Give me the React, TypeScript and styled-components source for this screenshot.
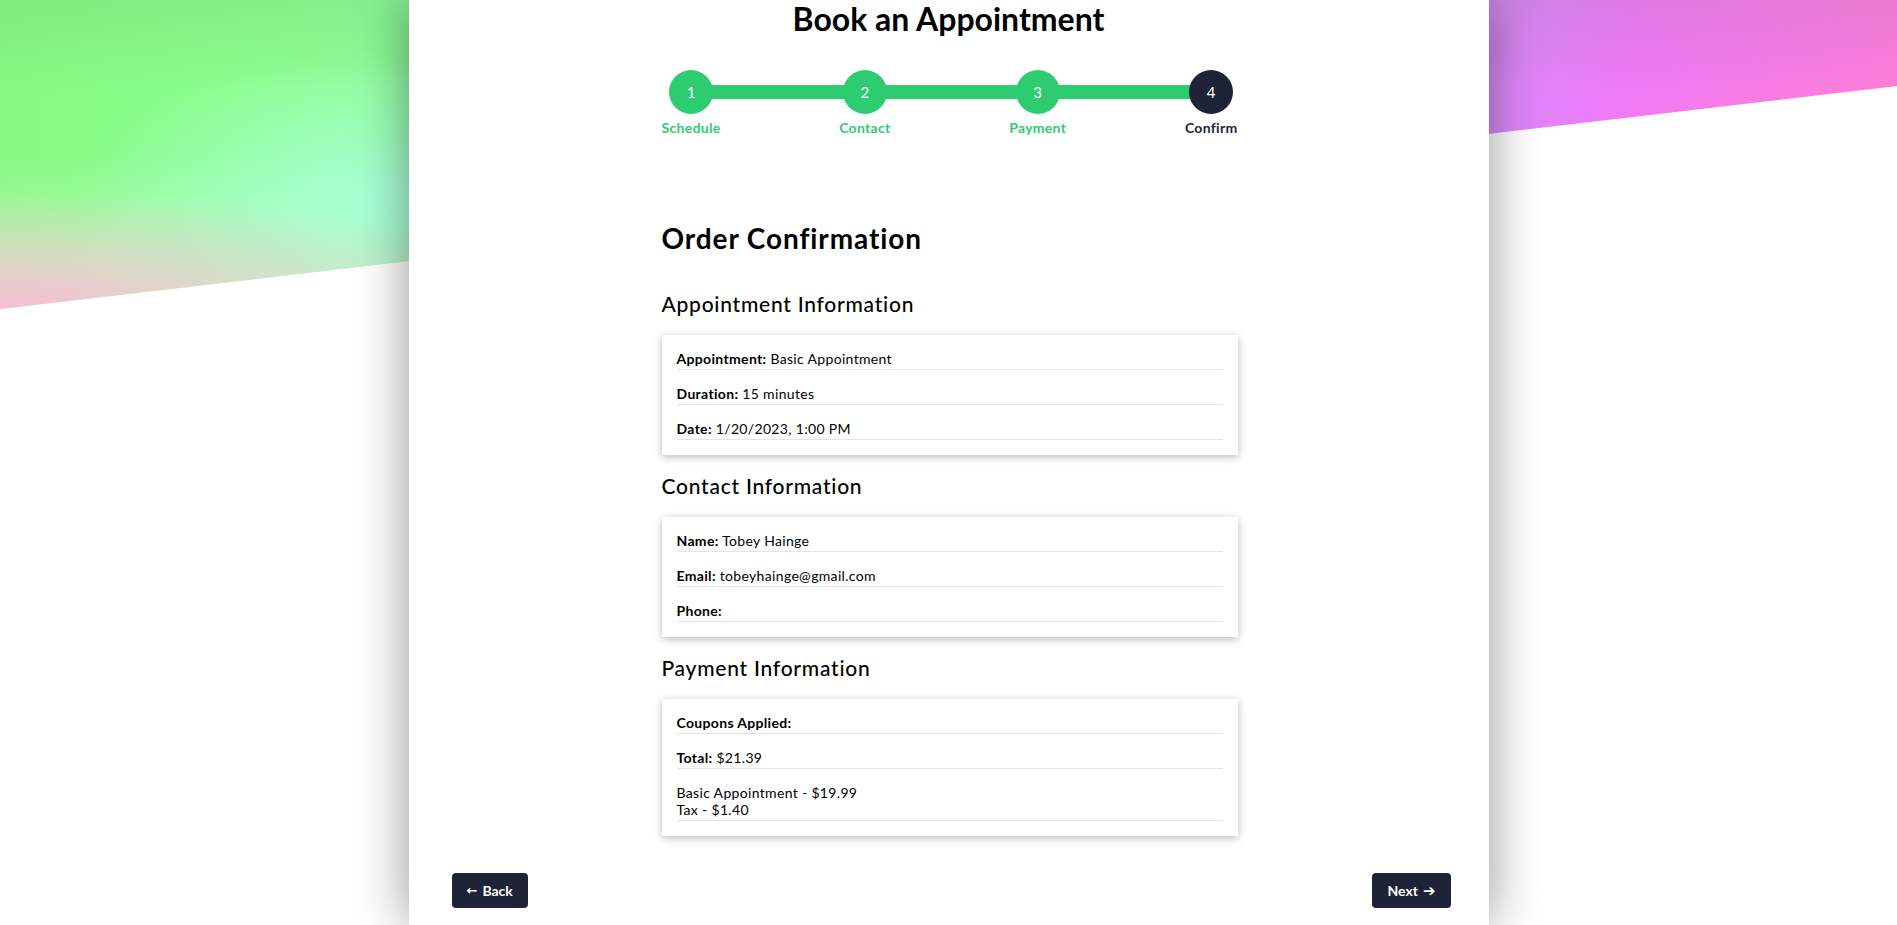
import React from "react";
import styled, { createGlobalStyle } from "styled-components";

const GlobalStyle = createGlobalStyle`
  html, body {
    margin: 0;
    padding: 0;
  }
  body {
    background: #ffffff;
    font-family: "Lato", "Open Sans", "DejaVu Sans", sans-serif;
    color: #000;
    overflow-x: hidden;
  }
  * { box-sizing: border-box; }
`;

const Page = styled.div`
  position: relative;
  min-height: 100vh;
  display: flex;
  justify-content: center;

  &::before {
    content: "";
    position: absolute;
    left: 0;
    right: 0;
    top: 0;
    height: 310px;
    clip-path: polygon(0 0, 100% 0, 100% 86px, 0 309px);
    background:
      radial-gradient(ellipse 560px 120px at 0% 100%, rgba(248, 190, 212, 1) 0%, rgba(248, 190, 212, 0.55) 45%, rgba(248, 190, 212, 0) 100%),
      radial-gradient(ellipse 330px 150px at 400px 200px, rgba(170, 255, 220, 0.95) 0%, rgba(170, 255, 220, 0) 100%),
      linear-gradient(to bottom, rgba(60, 110, 60, 0.1) 0%, rgba(0, 0, 0, 0) 30%, rgba(255, 255, 255, 0) 50%, rgba(255, 255, 255, 0.45) 100%),
      radial-gradient(ellipse 420px 160px at 100% 70%, rgba(255, 128, 180, 0.9) 0%, rgba(255, 128, 180, 0) 100%),
      linear-gradient(90deg, #86fa84 0%, #8aff8c 12%, #8eff98 21%, #a8f0e8 32%, #c8c0ff 50%, #dc88fa 79%, #f07af8 86%, #ff7ce0 100%);
  }
`;

const Panel = styled.main`
  position: relative;
  z-index: 1;
  width: 1080px;
  min-height: 100vh;
  background: #ffffff;
  box-shadow: 0 0 50px rgba(0, 0, 0, 0.42);
  padding: 0 0 10px;
  display: flex;
  flex-direction: column;
`;

const Title = styled.h1`
  margin: 0;
  text-align: center;
  font-size: 32px;
  line-height: 38px;
  font-weight: 700;
  color: #000;
`;

const Stepper = styled.ol`
  position: relative;
  list-style: none;
  width: 576px;
  margin: 32px 0 0 253px;
  padding: 0;
  display: flex;
  justify-content: space-between;

  &::before {
    content: "";
    position: absolute;
    left: 30px;
    right: 28px;
    top: 15px;
    height: 14px;
    background: #2ecc71;
  }
`;

const Step = styled.li`
  position: relative;
  display: flex;
  flex-direction: column;
  align-items: center;
`;

const Circle = styled.span<{ $active?: boolean }>`
  width: 44px;
  height: 44px;
  border-radius: 50%;
  background: ${(p) => (p.$active ? "#1e2338" : "#2ecc71")};
  color: #ffffff;
  font-size: 15px;
  display: flex;
  align-items: center;
  justify-content: center;
`;

const StepLabel = styled.span<{ $active?: boolean }>`
  margin-top: 5px;
  font-size: 14px;
  line-height: 17px;
  font-weight: 700;
  letter-spacing: 0.3px;
  white-space: nowrap;
  color: ${(p) => (p.$active ? "#1e2338" : "#2ecc71")};
`;

const Content = styled.section`
  width: 576px;
  margin-left: 253px;
`;

const PageHeading = styled.h2`
  margin: 85px 0 0;
  font-size: 28px;
  line-height: 34px;
  font-weight: 700;
  letter-spacing: 0.9px;
`;

const Sections = styled.div`
  margin-top: 36px;
  display: flex;
  flex-direction: column;
  gap: 18px;
`;

const SectionTitle = styled.h3`
  margin: 0 0 19px;
  font-size: 21px;
  line-height: 25px;
  font-weight: 500;
  letter-spacing: 0.75px;
`;

const Card = styled.div`
  background: #ffffff;
  box-shadow: 0 2px 8px rgba(0, 0, 0, 0.28);
  padding: 0 15px 15px;
`;

const Row = styled.div`
  padding: 15px 0 2px;
  border-bottom: 1px solid #e4e4e4;
  font-size: 14px;
  line-height: 17px;
  letter-spacing: 0.33px;
`;

const Key = styled.strong`
  font-weight: 700;
`;

const Footer = styled.div`
  margin-top: 37px;
  padding: 0 38px 0 43px;
  display: flex;
  justify-content: space-between;
`;

const NavButton = styled.button`
  height: 35px;
  padding: 0 15px;
  border: none;
  border-radius: 4px;
  background: #1e2338;
  color: #ffffff;
  font-family: inherit;
  font-size: 14px;
  font-weight: 700;
  display: flex;
  align-items: center;
  gap: 5px;
  cursor: pointer;
`;

const Arrow = styled.span<{ $heavy?: boolean }>`
  font-family: "DejaVu Sans", sans-serif;
  font-size: ${(p) => (p.$heavy ? "15px" : "13px")};
`;

const steps = ["Schedule", "Contact", "Payment", "Confirm"];

type Item = { k?: string; v?: React.ReactNode };

const sections: { title: string; rows: Item[] }[] = [
  {
    title: "Appointment Information",
    rows: [
      { k: "Appointment:", v: "Basic Appointment" },
      { k: "Duration:", v: "15 minutes" },
      { k: "Date:", v: "1/20/2023, 1:00 PM" },
    ],
  },
  {
    title: "Contact Information",
    rows: [
      { k: "Name:", v: "Tobey Hainge" },
      { k: "Email:", v: "tobeyhainge@gmail.com" },
      { k: "Phone:", v: "" },
    ],
  },
  {
    title: "Payment Information",
    rows: [
      { k: "Coupons Applied:", v: "" },
      { k: "Total:", v: "$21.39" },
      {
        v: (
          <>
            Basic Appointment - $19.99
            <br />
            Tax - $1.40
          </>
        ),
      },
    ],
  },
];

export default function App() {
  return (
    <>
      <GlobalStyle />
      <Page>
        <Panel>
          <Title>Book an Appointment</Title>
          <Stepper>
            {steps.map((s, i) => {
              const active = i === steps.length - 1;
              return (
                <Step key={s}>
                  <Circle $active={active}>{i + 1}</Circle>
                  <StepLabel $active={active}>{s}</StepLabel>
                </Step>
              );
            })}
          </Stepper>
          <Content>
            <PageHeading>Order Confirmation</PageHeading>
            <Sections>
              {sections.map((sec) => (
                <div key={sec.title}>
                  <SectionTitle>{sec.title}</SectionTitle>
                  <Card>
                    {sec.rows.map((r, i) => (
                      <Row key={i}>
                        {r.k && <Key>{r.k}</Key>}
                        {r.k ? " " : null}
                        {r.v}
                      </Row>
                    ))}
                  </Card>
                </div>
              ))}
            </Sections>
          </Content>
          <Footer>
            <NavButton>
              <Arrow>←</Arrow>Back
            </NavButton>
            <NavButton>
              Next<Arrow $heavy>➔</Arrow>
            </NavButton>
          </Footer>
        </Panel>
      </Page>
    </>
  );
}
